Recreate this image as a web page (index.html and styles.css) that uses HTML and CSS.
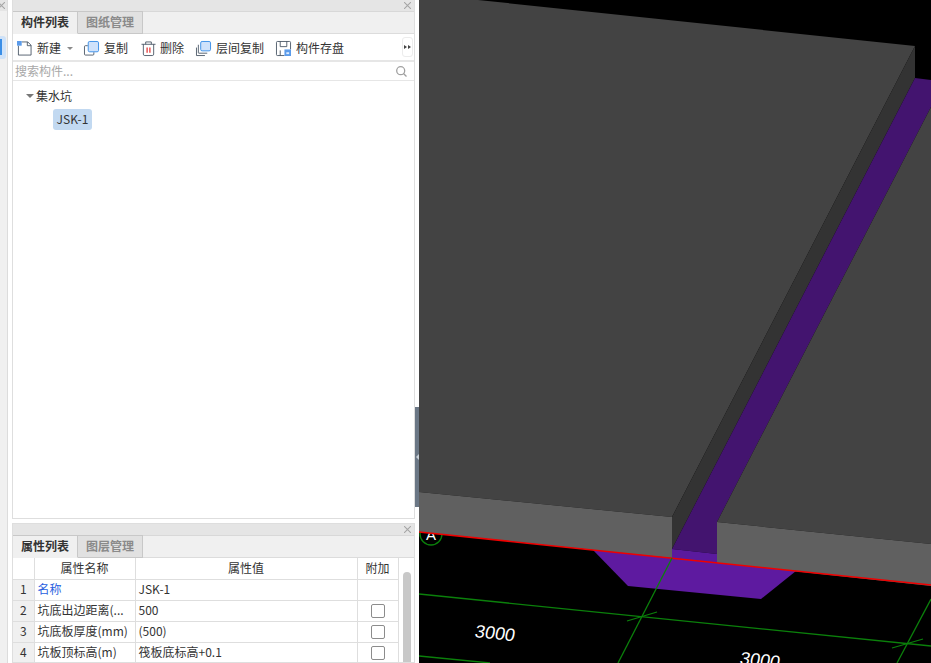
FILE: index.html
```html
<!DOCTYPE html>
<html lang="zh">
<head>
<meta charset="utf-8">
<title>构件列表</title>
<link rel="stylesheet" href="styles.css">
</head>
<body>
<div class="app">
  <aside class="rail">
    <div class="rail-head"><svg class="close" viewBox="0 0 8 8"><path d="M0 0L8 8M8 0L0 8"/></svg></div>
    <div class="rail-sel"><i></i></div>
  </aside>
  <main class="panels">
    <section class="panel panel-top">
      <div class="panel-head"><svg class="close" viewBox="0 0 8 8"><path d="M0 0L8 8M8 0L0 8"/></svg></div>
      <div class="tabs">
        <div class="tab active">构件列表</div>
        <div class="tab">图纸管理</div>
      </div>
      <div class="toolbar">
        <div class="tool tool-new">
          <svg class="ico" viewBox="0 0 16 16"><path class="ln" d="M1.500 5V15H15V4.500L11.500 1H5"/><path class="ln" d="M11 1V5H15"/><rect class="dots" x="0" y="0" width="5" height="5"/></svg>
          <span>新建</span>
          <i class="caret"></i>
        </div>
        <div class="tool tool-copy">
          <svg class="ico" viewBox="0 0 16 16"><path class="ln" d="M4 5H1.500Q0.500 5 0.500 6V14Q0.500 15 1.500 15H9.500Q10.500 15 10.500 14V12"/><rect class="fr" x="4.500" y="0.500" width="11" height="11" rx="1.500"/></svg>
          <span>复制</span>
        </div>
        <div class="tool tool-del">
          <svg class="ico" viewBox="0 0 16 16"><path class="ln" d="M0.500 3.500H15.500M5 3.500V1H11V3.500M2.500 3.500V14Q2.500 15.500 4 15.500H12Q13.500 15.500 13.500 14V3.500"/><path class="rd" d="M6.500 7V12.500M9.500 7V12.500"/></svg>
          <span>删除</span>
        </div>
        <div class="tool tool-layer">
          <svg class="ico" viewBox="0 0 16 16"><path class="ln" d="M2.500 4V12.500Q2.500 13 3 13H12"/><path class="ln" d="M0.500 7V15.500H9.500"/><rect class="fr" x="5" y="0.500" width="10.500" height="10" rx="1.500"/></svg>
          <span>层间复制</span>
        </div>
        <div class="tool tool-save">
          <svg class="ico" viewBox="0 0 16 16"><path class="ln" d="M9 15.500H1.500Q0.500 15.500 0.500 14.500V1.500Q0.500 0.500 1.500 0.500H14.500Q15.500 0.500 15.500 1.500V9"/><path class="ln" d="M4.500 0.500V6H11.500V0.500M4.500 15.500V10"/><rect class="badge" x="9" y="9" width="7" height="7"/><rect class="badge-in" x="11" y="12" width="3" height="2"/></svg>
          <span>构件存盘</span>
        </div>
        <div class="more"><i></i><i></i></div>
      </div>
      <div class="search">
        <span>搜索构件...</span>
        <svg class="mag" viewBox="0 0 11 11"><circle cx="4.700" cy="4.700" r="4"/><path d="M7.700 7.700L10.500 10.500"/></svg>
      </div>
      <div class="tree">
        <div class="tree-root"><i class="tree-caret"></i><span>集水坑</span></div>
        <div class="tree-leaf"><span class="pill">JSK-1</span></div>
      </div>
    </section>
    <section class="panel panel-bottom">
      <div class="panel-head"><svg class="close" viewBox="0 0 8 8"><path d="M0 0L8 8M8 0L0 8"/></svg></div>
      <div class="tabs">
        <div class="tab active">属性列表</div>
        <div class="tab">图层管理</div>
      </div>
      <div class="grid-wrap">
        <table class="grid">
          <colgroup><col class="c-idx"><col class="c-name"><col class="c-val"><col class="c-add"></colgroup>
          <thead><tr><th></th><th>属性名称</th><th>属性值</th><th>附加</th></tr></thead>
          <tbody>
            <tr><td class="idx">1</td><td class="link">名称</td><td>JSK-1</td><td></td></tr>
            <tr><td class="idx">2</td><td>坑底出边距离(...</td><td>500</td><td class="chk"><i></i></td></tr>
            <tr><td class="idx">3</td><td>坑底板厚度(mm)</td><td>(500)</td><td class="chk"><i></i></td></tr>
            <tr><td class="idx">4</td><td>坑板顶标高(m)</td><td>筏板底标高+0.1</td><td class="chk"><i></i></td></tr>
          </tbody>
        </table>
        <div class="scroll"><div class="thumb"></div></div>
      </div>
    </section>
  </main>
  <div class="splitter"><div class="handle"><i></i></div></div>
  <div class="view">
    <svg class="scene" viewBox="419 0 512 663" width="512" height="663">
      <rect x="419" y="0" width="512" height="663" fill="#000"/>
      <circle class="g" cx="431" cy="534" r="11"/>
      <text class="axis" x="431" y="540">A</text>
      <polygon fill="#5e1aa0" points="592,549 628,586 761,599 796,571"/>
      <polygon fill="#434343" points="419,0 478,0 915,46 672,517 419,492"/>
      <polygon fill="#606060" points="419,492 672,517 672,558 419,532"/>
      <polygon fill="#333333" points="915,46 915,78 672,549 672,517"/>
      <polygon fill="#43146f" points="915,78 931,80 931,107 717,522 717,554 672,549"/>
      <polygon fill="#5a1a9e" points="672,549 717,554 717,563 672,558"/>
      <polygon fill="#434343" points="717,522 931,107 931,544"/>
      <polygon fill="#606060" points="717,522 931,544 931,586 717,563"/>
      <line class="r" x1="419" y1="532" x2="931" y2="585"/>
      <line class="g" x1="419" y1="594" x2="931" y2="646"/>
      <line class="g" x1="419" y1="656" x2="490" y2="663"/>
      <line class="g" x1="672" y1="558" x2="618" y2="663"/>
      <line class="g" x1="931" y1="599" x2="897" y2="663"/>
      <line class="g" x1="627" y1="621" x2="657" y2="612"/>
      <line class="g" x1="892" y1="648" x2="923" y2="639"/>
      <text class="dim" transform="translate(474 637) rotate(6) skewX(-6)">3000</text>
      <text class="dim" transform="translate(739 664) rotate(6) skewX(-6)">3000</text>
    </svg>
  </div>
</div>
</body>
</html>
```
FILE: styles.css
```css
* { box-sizing: border-box; }
html, body { margin: 0; padding: 0; height: 100%; overflow: hidden; background: #fff; }
body { font: 12px/1.2 "Noto Sans CJK SC", "Noto Sans", sans-serif; color: #333; }
.app { display: flex; width: 931px; height: 663px; overflow: hidden; }

.rail { width: 8px; margin-right: 4px; background: #f0f0f0; border-right: 1px solid #dcdcdc; flex: none; }
.rail-head { height: 11px; background: #e5e5e5; display: flex; justify-content: flex-end; align-items: center; overflow: hidden; padding-right: 2px; }
.rail-sel { width: 6px; height: 23px; margin-top: 25px; padding-top: 3px; background: #cfe2f8; border-radius: 0 3px 3px 0; }
.rail-sel i { display: block; width: 2px; height: 16px; background: #3a8ee6; }

.panels { width: 403px; flex: none; display: flex; flex-direction: column; gap: 4px; }
.panel { border: 1px solid #dedede; border-top: 0; background: #fff; display: flex; flex-direction: column; overflow: hidden; }
.panel-top { height: 519px; flex: none; }
.panel-bottom { flex: 1; min-height: 0; border-top: 1px solid #dedede; }
.panel-head { height: 11px; flex: none; background: #e5e5e5; display: flex; justify-content: flex-end; align-items: center; padding-right: 3px; }
.close { width: 7px; height: 7px; flex: none; }
.close path { stroke: #a5a5a5; stroke-width: 1.200; fill: none; }

.tabs { height: 23px; flex: none; display: flex; background: #f0f0f0; border-top: 1px solid #d8d8d8; border-bottom: 1px solid #dcdcdc; }
.tab { width: 65px; margin-top: -1px; height: 23px; display: flex; align-items: center; justify-content: center; font-weight: 700; color: #8a8a8a; background: #e1e1e1; border: 1px solid #c8c8c8; border-left: 0; }
.tab.active { width: 65px; color: #333; background: #f0f0f0; border-color: #c8c8c8; border-bottom-color: #f0f0f0; }

.toolbar { height: 28px; flex: none; display: flex; align-items: center; padding: 2px 0 0 4px; border-bottom: 2px solid #e6e6e6; position: relative; }
.tool { display: flex; align-items: center; gap: 5px; color: #333; }
.ico { width: 15px; height: 15px; flex: none; overflow: visible; }
.ln { fill: none; stroke: #3f4c5c; stroke-width: 0.900; }
.fr { fill: #cfe2fb; stroke: #3a8ee6; stroke-width: 1; }
.rd { fill: none; stroke: #e02020; stroke-width: 1.200; }
.dots { fill: #5b9bea; }
.badge { fill: #5b9bea; }
.badge-in { fill: #dcebff; }
.caret { width: 0; height: 0; margin-left: 1px; border: 3px solid transparent; border-top: 3px solid #8a8a8a; border-bottom: 0; }
.tool-copy { margin-left: 11px; }
.tool-del { margin-left: 13px; gap: 4px; }
.tool-layer { margin-left: 12px; }
.tool-save { margin-left: 12px; }
.more { position: absolute; right: 1px; top: 3px; width: 11px; height: 20px; border: 1px solid #ececec; border-radius: 3px; display: flex; align-items: center; justify-content: center; gap: 1px; }
.more i { width: 0; height: 0; border: 2.500px solid transparent; border-left: 3px solid #444; border-right: 0; }

.search { height: 19px; flex: none; display: flex; align-items: center; justify-content: space-between; padding: 1px 7px 0 2px; color: #a8a8a8; border-bottom: 1px solid #e6e6e6; }
.mag { width: 11px; height: 11px; flex: none; }
.mag circle, .mag path { fill: none; stroke: #a0a0a0; stroke-width: 1.300; }

.tree { flex: 1; padding-top: 5px; }
.tree-root { height: 20px; display: flex; align-items: center; padding-left: 13px; gap: 2px; font-size: 12px; }
.tree-caret { width: 0; height: 0; border: 4px solid transparent; border-top: 4px solid #777; border-bottom: 0; }
.tree-leaf { margin-top: 3px; padding-left: 40px; }
.pill { display: block; width: 39px; height: 21px; line-height: 20px; text-align: center; background: #c2d9f1; border-radius: 3px; color: #333; }

.grid-wrap { flex: 1; display: flex; min-height: 0; overflow: hidden; }
.grid { width: 385px; height: 105px; flex: none; table-layout: fixed; border-collapse: collapse; }
.c-idx { width: 21px; }
.c-name { width: 101px; }
.c-val { width: 222px; }
.c-add { width: 41px; }
.grid th, .grid td { height: 21px; padding: 0 3px; border: 1px solid #dedede; border-top: 0; font-weight: 400; white-space: nowrap; overflow: hidden; text-align: left; }
.grid th { text-align: center; height: 21px; }
.grid th:first-child, .grid td:first-child { border-left: 0; }
.grid td.idx { text-align: center; background: #f0f0f0; padding: 0; }
.grid td.link { color: #2a5fe0; }
.grid td.chk { text-align: center; padding: 0; }
.chk i { display: block; width: 14px; height: 14px; margin: 0 auto; border: 1px solid #8c8c8c; border-radius: 2px; }
.scroll { flex: 1; padding: 14px 3px 0 4px; }
.thumb { width: 8px; height: 120px; background: #c8c8c8; border-radius: 4px; }

.splitter { width: 4px; flex: none; display: flex; flex-direction: column; padding-top: 407px; }
.handle { width: 4px; height: 100px; background: #6b7785; display: flex; align-items: center; justify-content: center; }
.handle i { width: 0; height: 0; border: 3px solid transparent; border-right: 3px solid #c8d0d8; border-left: 0; }

.view { flex: 1; min-width: 0; background: #000; overflow: hidden; }
.scene { display: block; }
.r { stroke: #f00000; stroke-width: 1.600; }
.g { stroke: #0b800b; stroke-width: 1.300; fill: none; }
.axis { fill: #fff; font: 15px "Liberation Sans", sans-serif; text-anchor: middle; }
.dim { fill: #fff; font: 18px "Liberation Sans", sans-serif; }
```
